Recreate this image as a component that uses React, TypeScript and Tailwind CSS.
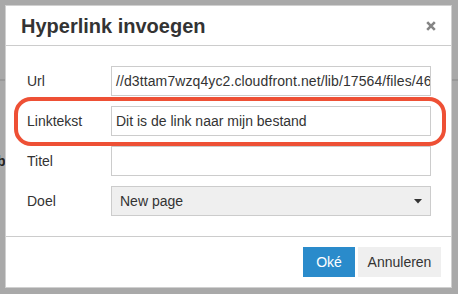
import React from 'react';

const font = { fontFamily: '"Liberation Sans", Arial, sans-serif' };

const Row: React.FC<{ label: string; children: React.ReactNode }> = ({ label, children }) => (
  <div className="flex items-center h-[30px]">
    <div className="w-[84px] shrink-0 text-[14px] text-[#333]">{label}</div>
    <div className="flex-1 min-w-0 h-full">{children}</div>
  </div>
);

export default function App() {
  return (
    <div className="relative w-[458px] h-[294px] bg-[#a9a9a9] overflow-hidden" style={font}>
      {/* page behind the modal */}
      <div className="absolute left-0 right-0 top-[79px] h-[2px] bg-[#999]" />
      <div className="absolute left-[-3px] top-[151px] text-[14px] font-bold text-[#222]">b</div>

      {/* Dialog */}
      <div className="absolute left-[5px] top-[5px] w-[447px] h-[283px] bg-white border border-[#d0d0d0] flex flex-col">
        {/* Header */}
        <div className="h-[40px] border-b border-[#ccc] flex items-center justify-between pl-[15px] pr-[15px]">
          <h3 className="text-[20px] font-bold text-[#333] leading-none pt-[1px]">Hyperlink invoegen</h3>
          <svg width="10" height="10" viewBox="0 0 10 10" className="mt-[1px]">
            <path d="M1.2 1.2 L8.8 8.8 M8.8 1.2 L1.2 8.8" stroke="#858585" strokeWidth="2.6" />
          </svg>
        </div>

        {/* Body */}
        <div className="h-[190px] pt-[20px] pb-[20px] pl-[21px] pr-[20px] flex flex-col gap-[10px]">
          <Row label="Url">
            <div className="h-full border border-[#ccc] px-[4px] flex items-center overflow-hidden whitespace-nowrap text-[14px] text-[#333] tracking-[0.1px]">
              //d3ttam7wzq4yc2.cloudfront.net/lib/17564/files/46
            </div>
          </Row>
          <Row label="Linktekst">
            <div className="h-full border border-[#ccc] px-[4px] flex items-center overflow-hidden whitespace-nowrap text-[14px] text-[#333]">
              Dit is de link naar mijn bestand
            </div>
          </Row>
          <Row label="Titel">
            <div className="h-full border border-[#ccc]" />
          </Row>
          <Row label="Doel">
            <div className="h-full border border-[#ccc] bg-[#efefef] pl-[8px] pr-[8px] flex items-center justify-between text-[14px] text-[#333]">
              <span>New page</span>
              <svg width="8" height="5" viewBox="0 0 8 5">
                <path d="M0 0 H8 L4 4.5 Z" fill="#333" />
              </svg>
            </div>
          </Row>
        </div>

        {/* Footer */}
        <div className="flex-1 border-t border-[#ccc] flex items-start justify-end gap-[3px] pt-[10px] pr-[10px]">
          <button className="w-[52px] h-[30px] bg-[#2a8bcb] text-white text-[14px]">Oké</button>
          <button className="w-[83px] h-[30px] bg-[#efefef] text-[#333] text-[14px]">Annuleren</button>
        </div>
      </div>

      {/* annotation ring */}
      <div className="absolute left-[14px] top-[97px] w-[432px] h-[49px] border-[4px] border-[#ee5035] rounded-[17px]" />
    </div>
  );
}
